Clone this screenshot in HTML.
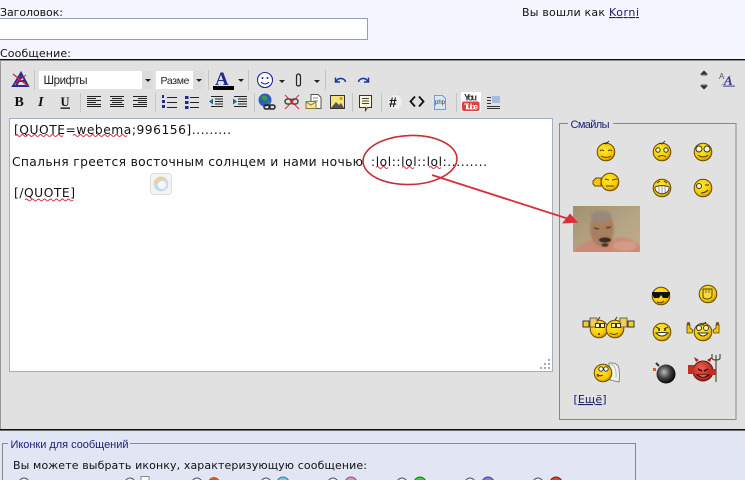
<!DOCTYPE html>
<html lang="ru"><head><meta charset="utf-8"><title>Сообщение</title>
<style>
html,body{margin:0;padding:0;width:745px;height:480px;overflow:hidden;background:#f5f5ff}
svg{display:block;position:absolute;left:0;top:0}
.v{font-family:"DejaVu Sans","Liberation Sans",sans-serif;font-size:11px;fill:#111}
.t{font-family:"Liberation Sans","DejaVu Sans",sans-serif;font-size:11.5px;fill:#222}
.e{font-family:"DejaVu Sans","Liberation Sans",sans-serif;font-size:12.3px;fill:#111}
.n{fill:#1c1c78}
</style></head><body>
<svg width="745" height="480" viewBox="0 0 745 480" xmlns="http://www.w3.org/2000/svg">
<defs>
<radialGradient id="y" cx=".42" cy=".38" r=".68"><stop offset="0" stop-color="#ffec30"/><stop offset=".7" stop-color="#f6c800"/><stop offset="1" stop-color="#a87800"/></radialGradient>
<radialGradient id="bomb" cx=".4" cy=".4" r=".65"><stop offset="0" stop-color="#bbb"/><stop offset=".5" stop-color="#444"/><stop offset="1" stop-color="#000"/></radialGradient>
<radialGradient id="devil" cx=".4" cy=".35" r=".7"><stop offset="0" stop-color="#f06050"/><stop offset="1" stop-color="#a01c14"/></radialGradient>
<linearGradient id="ph" x1="0" y1="0" x2="1" y2="1"><stop offset="0" stop-color="#a3906f"/><stop offset=".6" stop-color="#b7a686"/><stop offset="1" stop-color="#bdab8d"/></linearGradient>
<filter id="bl" x="-20%" y="-20%" width="140%" height="140%"><feGaussianBlur stdDeviation="1"/></filter>
<filter id="bs" x="-30%" y="-30%" width="160%" height="160%"><feGaussianBlur stdDeviation=".5"/></filter>
<clipPath id="phc"><rect x="573" y="206" width="67" height="46"/></clipPath>
<symbol id="f" overflow="visible"><circle r="8.8" fill="url(#y)" stroke="#6a4c04" stroke-width="1"/></symbol>
</defs>

<!-- backgrounds -->
<rect width="745" height="59" fill="#f5f5ff"/>
<rect y="59" width="745" height="371" fill="#e1e1e2"/>
<rect y="59" width="745" height="1.4" fill="#111"/>
<rect x="0" y="60" width="1" height="370" fill="#999"/>
<rect y="429" width="745" height="1.6" fill="#111"/>
<rect y="431" width="745" height="49" fill="#e2e5f4"/>

<!-- top texts -->
<text class="v" x="0" y="16" textLength="63">Заголовок:</text>
<rect x="-2" y="18.500" width="369.500" height="21" fill="#fff" stroke="#8ea2b4"/>
<text class="v" x="0" y="57" textLength="71">Сообщение:</text>
<text class="v" x="522" y="16" textLength="83">Вы вошли как</text>
<text class="v n" x="609" y="16" textLength="30" text-decoration="underline">Korni</text>

<!-- toolbar row 1 -->
<g transform="translate(12,71)">
<path d="M1 15H16L9 2Z" fill="none" stroke="#2a2a90" stroke-width="2"/><path d="M4 15L10 4M6 10H14" stroke="#2a2a90" stroke-width="2"/><path d="M1 3L16 15" stroke="#d02030" stroke-width="1.200"/><path d="M1 14L14 4" stroke="#d02030" stroke-width="1"/>
</g>
<g fill="#c4c4c6">
<rect x="34" y="70" width="1" height="20"/><rect x="208" y="70" width="1" height="20"/><rect x="248" y="70" width="1" height="20"/><rect x="325" y="70" width="1" height="20"/>
<rect x="80" y="93" width="1" height="19"/><rect x="155" y="93" width="1" height="19"/><rect x="254" y="93" width="1" height="19"/><rect x="352" y="93" width="1" height="19"/><rect x="381" y="93" width="1" height="19"/><rect x="456" y="93" width="1" height="19"/>
</g>
<rect x="39" y="71" width="114" height="18" fill="#fff"/>
<rect x="142" y="71" width="11" height="18" fill="#dcdcdc"/>
<path d="M145 79h6l-3 3z" fill="#222"/>
<text class="t" x="43.500" y="84" textLength="44">Шрифты</text>
<rect x="156" y="71" width="48" height="18" fill="#fff"/>
<rect x="193" y="71" width="11" height="18" fill="#dcdcdc"/>
<path d="M196 79h6l-3 3z" fill="#222"/>
<text class="t" x="160.500" y="84" textLength="29" style="font-size:10.500px">Разме</text>

<text x="215" y="85" style="font-family:'Liberation Serif',serif;font-weight:bold;font-size:19px;fill:#1c2a90">A</text>
<rect x="213" y="86" width="21" height="4" fill="#000"/>
<path d="M238 79h6l-3 3z" fill="#222"/>
<circle cx="265" cy="80" r="7.500" fill="#fff" stroke="#1f2a90" stroke-width="1.100"/>
<circle cx="262.500" cy="78" r="1" fill="#1f2a90"/><circle cx="267.500" cy="78" r="1" fill="#1f2a90"/>
<path d="M261 82q4 4 8 0" fill="none" stroke="#1f2a90"/>
<path d="M279 80h6l-3 3z" fill="#222"/>
<path d="M296.500 83V77q0-3 2-3t2 3v7q0 2-2 2t-2-2V78" fill="none" stroke="#222" stroke-width="1.200"/>
<path d="M314 80h6l-3 3z" fill="#222"/>
<path d="M335.500 77.500v4.500h4.500M336 81.500q2-3.500 5.500-3t4 3.500" fill="none" stroke="#1c3a9a" stroke-width="1.500"/>
<path d="M368.500 77.500v4.500h-4.500M368 81.500q-2-3.500-5.500-3t-4 3.500" fill="none" stroke="#1c3a9a" stroke-width="1.500"/>

<!-- toolbar row 2 -->
<text x="14.500" y="106" style="font-family:'Liberation Serif',serif;font-weight:bold;font-size:14px;fill:#111">B</text>
<text x="38" y="106" style="font-family:'Liberation Serif',serif;font-weight:bold;font-style:italic;font-size:14px;fill:#111">I</text>
<text x="60.500" y="106" style="font-family:'Liberation Serif',serif;font-weight:bold;font-size:12.500px;fill:#111">U</text>
<rect x="60.500" y="107.500" width="9.500" height="1.300" fill="#111"/>
<g stroke="#222" stroke-width="1">
<path d="M87 96.500h14M87 98.500h9M87 100.500h14M87 102.500h9M87 104.500h14M87 106.500h14"/>
<path d="M110 96.500h14M112 98.500h10M110 100.500h14M112 102.500h10M110 104.500h14M110 106.500h14"/>
<path d="M133 96.500h14M138 98.500h9M133 100.500h14M138 102.500h9M133 104.500h14M133 106.500h14"/>
<path d="M167 97.500h10M167 102.500h10M167 107.500h10"/>
<path d="M190 97.500h9M190 102.500h9M190 107.500h9"/>
<path d="M211 96.500h12M215 99h8M215 101.500h8M215 104h8M211 106.500h12"/>
<path d="M234 96.500h13M238 99h9M238 101.500h9M238 104h9M234 106.500h13"/>
</g>
<g fill="#1f2a90">
<rect x="162" y="95" width="2" height="3"/><rect x="162" y="100" width="3" height="3"/><rect x="162" y="105" width="3" height="3"/>
<rect x="185" y="96" width="3.500" height="3"/><rect x="185" y="101" width="3.500" height="3"/><rect x="185" y="106" width="3.500" height="3"/>
</g>
<g fill="#1f6a90"><path d="M209 101.500l4-3v6z"/><path d="M237 101.500l-4-3v6z"/></g>
<!-- globe -->
<circle cx="265" cy="100" r="6.500" fill="#2a5ec0"/><path d="M261 97q4-3 6 0t-3 4zM267 102l3-1-1 3z" fill="#3c9a3c"/>
<g fill="none" stroke="#222" stroke-width="1.500"><rect x="264" y="105" width="6" height="4" rx="2"/><rect x="269" y="105" width="6" height="4" rx="2"/></g>
<!-- unlink -->
<g fill="none" stroke="#444" stroke-width="1.500"><rect x="285" y="99" width="7" height="5" rx="2.500"/><rect x="291" y="99" width="7" height="5" rx="2.500"/></g>
<path d="M285 95L299 109M299 95L285 109" stroke="#d03030" stroke-width="1"/>
<!-- doc with envelope -->
<path d="M311 94.500h7l3 3v11h-10z" fill="#fff" stroke="#555"/><path d="M313 98h5M313 101h5" stroke="#888"/>
<path d="M306 101.500h10v7h-10z" fill="#f3e6a0" stroke="#8a7a30"/><path d="M306 102l5 3 5-3" fill="none" stroke="#8a7a30"/>
<!-- image -->
<rect x="330.500" y="95.500" width="14" height="13" fill="#f4e27a" stroke="#333"/>
<path d="M331 108l5-6 3 3 2-2 3 5z" fill="#555"/><circle cx="341" cy="98.500" r="1.500" fill="#e08a20"/>
<!-- quote -->
<path d="M359.500 95.500h12v12h-4l-2 3v-3h-6z" fill="#fff8d8" stroke="#333"/><path d="M362 98.500h7M362 101h7M362 103.500h7" stroke="#444"/>
<!-- # <> php -->
<circle cx="395" cy="102" r="7" fill="#eee"/>
<text x="389" y="107" style="font-family:'Liberation Sans',sans-serif;font-weight:bold;font-size:14px;fill:#111">#</text>
<path d="M415 96.500l-4.500 5 4.500 5M419 96.500l4.500 5-4.500 5" fill="none" stroke="#111" stroke-width="1.800"/>
<path d="M434.500 95.500h8l3 3v11h-11z" fill="#d8e6f6" stroke="#7a9cc8"/>
<text x="435" y="104" style="font-family:'Liberation Sans',sans-serif;font-size:6px;fill:#333" textLength="10">php</text>
<!-- youtube -->
<rect x="461" y="92" width="20" height="20" fill="#fff"/>
<text x="464" y="100.500" style="font-family:'Liberation Sans',sans-serif;font-weight:bold;font-size:9px;fill:#333" textLength="13">You</text>
<rect x="462" y="101.500" width="17.500" height="9.500" rx="2" fill="#e04040"/>
<text x="464" y="109.500" style="font-family:'Liberation Sans',sans-serif;font-weight:bold;font-size:8.500px;fill:#fff" textLength="14">Tube</text>
<!-- list -->
<path d="M487 97.500h4M487 100.500h4M487 103.500h4M487 106.500h13M487 108.500h13" stroke="#333"/>
<rect x="492" y="96" width="8" height="7" fill="#a8bce0"/>

<!-- right toolbar -->
<path d="M704 71l-3 3h6zM701 75h6" fill="#333" stroke="#333" stroke-width=".8"/>
<path d="M704 89l-3-3h6zM701 85h6" fill="#333" stroke="#333" stroke-width=".8"/>
<text x="719" y="79" style="font-family:'Liberation Sans',sans-serif;font-size:8px;fill:#555">A</text>
<path d="M721 86l10-11" stroke="#bbb"/>
<text x="724" y="85" style="font-family:'Liberation Serif',serif;font-weight:bold;font-style:italic;font-size:13px;fill:#3a3a90">A</text>
<rect x="723" y="85.600" width="12" height="1" fill="#3a3a90"/>

<!-- editor -->
<rect x="9.500" y="118.500" width="543" height="253" fill="#fff" stroke="#9fb0c4"/>
<text class="e" x="14" y="134" textLength="217">[QUOTE=webema;996156].........</text>
<text class="e" x="12" y="166" textLength="351">Спальня греется восточным солнцем и нами ночью</text>
<text class="e" x="371" y="166" textLength="116">:lol::lol::lol:.........</text>
<text class="e" x="14" y="197" textLength="61">[/QUOTE]</text>
<g fill="none" stroke="#c8343c" stroke-width="1">
<path d="M15 135.500q1.500-2 3 0t3 0 3 0 3 0 3 0 3 0 3 0 3 0 3 0 3 0 3 0 3 0 3 0 3 0 3 0 3 0"/>
<path d="M73 135.500q1.500-2 3 0t3 0 3 0 3 0 3 0 3 0 3 0 3 0 3 0 3 0 3 0 3 0 3 0 3 0 3 0 3 0 3 0 3 0"/>
<path d="M25 200q1.500-2 3 0t3 0 3 0 3 0 3 0 3 0 3 0 3 0 3 0 3 0 3 0 3 0 3 0 3 0 3 0 3 0"/>
<path d="M376 167.500q1.500-2 3 0t3 0 3 0 3 0"/>
<path d="M402 167.500q1.500-2 3 0t3 0 3 0 3 0"/>
<path d="M429 167.500q1.500-2 3 0t3 0 3 0 3 0"/>
</g>
<g fill="#aaa"><rect x="548" y="359" width="2" height="2"/><rect x="544" y="363" width="2" height="2"/><rect x="548" y="363" width="2" height="2"/><rect x="540" y="367" width="2" height="2"/><rect x="544" y="367" width="2" height="2"/><rect x="548" y="367" width="2" height="2"/></g>

<!-- spinner bubble -->
<rect x="150.500" y="173.500" width="21" height="21" rx="3.500" fill="#f6f4f2" stroke="#ddd"/>
<circle cx="161" cy="184" r="7.500" fill="#c8dcec"/>
<path d="M154 183a7 6 0 0 1 13-3q-5-1-7 1t-6 2z" fill="#f2cf90"/>
<circle cx="162" cy="185" r="4" fill="#fff" opacity=".8"/>

<!-- smilies fieldset -->
<rect x="559.500" y="123.500" width="176.500" height="296" fill="none" stroke="#8a8a84"/>
<rect x="568" y="118" width="45" height="10" fill="#e1e1e2"/>
<text class="t n" x="570.500" y="128" textLength="39" style="font-size:11px">Смайлы</text>

<!-- row 1 -->
<use href="#f" x="606" y="152"/><path d="M600 151q2-2 4 0M608 151q2-2 4 0M601 156q5 3 10 0" fill="none" stroke="#5a4208"/><path d="M603 143l3 1 3-3M606 144v-2" fill="none" stroke="#332" stroke-width=".9"/>
<use href="#f" x="662" y="152"/><circle cx="658" cy="150" r="2.200" fill="#fff8c0" stroke="#333"/><circle cx="666" cy="150" r="2.200" fill="#fff8c0" stroke="#333"/><path d="M658 157q4-3 8 0" fill="none" stroke="#5a4208"/><path d="M659 143l3 1 3-3" fill="none" stroke="#332" stroke-width=".9"/>
<use href="#f" x="703" y="152"/><circle cx="699" cy="149" r="3" fill="#fff8c0" stroke="#333"/><circle cx="707" cy="149" r="3" fill="#fff8c0" stroke="#333"/><path d="M698 155q5 4 10 0" fill="none" stroke="#333"/>
<!-- row 2 -->
<path d="M593 181l3-3h5v8h-6l-2-2z" fill="#f6c800" stroke="#6a4c04"/><use href="#f" x="610" y="182"/><path d="M605 179l4 1M612 180l5-1M606 186h8" fill="none" stroke="#5a4208"/>
<use href="#f" x="662" y="188"/><path d="M655 187q7-3 14 0v2q-1 4-7 5-6-1-7-5z" fill="#fff" stroke="#333" stroke-width=".9"/><path d="M659 186v8M662 185.500v9M665 186v8" stroke="#555" stroke-width=".6"/><path d="M657 183l3-2M667 183l-3-2" stroke="#333"/>
<use href="#f" x="703" y="188"/><circle cx="699" cy="186" r="2.500" fill="#fff8c0" stroke="#333"/><path d="M705 185h4M701 193q4 0 7-3" fill="none" stroke="#333"/>

<!-- photo -->
<g clip-path="url(#phc)">
<rect x="573" y="206" width="67" height="46" fill="url(#ph)"/>
<g filter="url(#bl)">
<path d="M612 240Q625 233 640 246V253H573Q578 245 590 240Z" fill="#c98a76"/>
<ellipse cx="602" cy="229" rx="12" ry="18" fill="#a9805f"/>
<ellipse cx="601" cy="216.500" rx="10.500" ry="6" fill="#97897a"/>
<ellipse cx="625" cy="246" rx="12" ry="5" fill="#d49c88"/>
</g>
<g filter="url(#bs)">
<path d="M594 228l5 1M606 228l5-1" stroke="#4a3020" stroke-width="1.400"/>
<ellipse cx="605" cy="240" rx="6" ry="2.500" fill="#3a2a20"/>
<ellipse cx="605" cy="245" rx="3.500" ry="1.800" fill="#4a3428"/>
</g>
</g>

<!-- row: glasses / fist -->
<use href="#f" x="661" y="296"/><path d="M652 292h18v2l-2 4h-5l-2-3-2 3h-5l-2-4z" fill="#111"/><path d="M657 302q4 2 7-1" fill="none" stroke="#5a4208"/>
<use href="#f" x="708" y="294"/><path d="M703 289h9v7q-1 3-5 3t-4-3z" fill="#f5d840" stroke="#5a4208"/><path d="M706 289v4M709 289v4" stroke="#5a4208" stroke-width=".7"/>

<!-- beers -->
<use href="#f" x="599" y="329"/><use href="#f" x="615" y="329"/>
<rect x="590" y="318" width="7" height="9" fill="#f3cc50" stroke="#665"/><rect x="620" y="318" width="7" height="9" fill="#f3cc50" stroke="#665"/>
<rect x="583" y="321" width="6" height="6" fill="#f3d030" stroke="#333"/><rect x="628" y="321" width="6" height="6" fill="#f3d030" stroke="#333"/>
<rect x="595.500" y="323.500" width="4" height="4" fill="#fff8c0" stroke="#333"/><rect x="600.500" y="323.500" width="4" height="4" fill="#fff8c0" stroke="#333"/>
<rect x="611.500" y="323.500" width="4" height="4" fill="#fff8c0" stroke="#333"/><rect x="616.500" y="323.500" width="4" height="4" fill="#fff8c0" stroke="#333"/>
<path d="M610 333q4 3 8 0" fill="none" stroke="#5a4208"/><circle cx="599" cy="334" r="1" fill="#332"/>
<path d="M598 320l2-3M615 320l2-3" stroke="#332"/>
<!-- grin -->
<use href="#f" x="662" y="332"/><path d="M656 327l4 2M668 327l-4 2" stroke="#333"/><path d="M656 333q6 6 12 0q-6-1-12 0z" fill="#fff" stroke="#333"/>
<circle cx="659" cy="330" r="1" fill="#333"/><circle cx="665" cy="330" r="1" fill="#333"/>
<!-- hands smiley -->
<use href="#f" x="703" y="332"/>
<path d="M687 333v-8l1-3v3h1v-3l1 3v3l3 2-1 3z" fill="#f6c800" stroke="#5a4208" stroke-width=".8"/>
<path d="M719 333v-8l-1-3v3h-1v-3l-1 3v3l-3 2 1 3z" fill="#f6c800" stroke="#5a4208" stroke-width=".8"/>
<circle cx="699" cy="328" r="2.500" fill="#fff8c0" stroke="#333"/><circle cx="706" cy="328" r="2.500" fill="#fff8c0" stroke="#333"/>
<path d="M698 333q5 6 10 0z" fill="#fff" stroke="#333"/>
<path d="M700 324l3 1 3-3" fill="none" stroke="#332"/>

<!-- angel -->
<path d="M609 363q9-1 10 6t0 13l-9-2z" fill="#f2f2ee" stroke="#8a8a80"/>
<use href="#f" x="603" y="373"/><circle cx="601" cy="369" r="2.200" fill="#fff" stroke="#333"/><circle cx="606" cy="369" r="2.200" fill="#fff" stroke="#333"/><path d="M597 374q3 3 6 1" fill="none" stroke="#333"/><circle cx="598" cy="375.500" r="1.300" fill="#d02030"/>
<path d="M611 364q6 2 5 14" fill="none" stroke="#bbb"/>
<!-- bomb -->
<circle cx="666" cy="374" r="9.500" fill="url(#bomb)"/>
<path d="M659 366l-3-3" stroke="#333" stroke-width="2"/>
<rect x="653" y="368" width="3" height="3" fill="#d86020"/>
<!-- devil -->
<circle cx="703" cy="371" r="10" fill="url(#devil)" stroke="#6a1008"/>
<path d="M696 362l-2-5 5 3zM710 362l2-5-5 3z" fill="#b02018"/>
<path d="M698 369l4 2M708 369l-4 2" stroke="#300" stroke-width="1.500"/>
<path d="M697 375q6 4 12 0z" fill="#fff" stroke="#400"/>
<path d="M688 365h6v9h-6z" fill="#c82c20"/>
<path d="M716 355v27M712 354v4q0 2 4 2t4-2v-4" fill="none" stroke="#332" stroke-width="1"/>
<rect x="710" y="369" width="6" height="6" fill="#c82c20"/>

<text class="v" x="573.500" y="403" textLength="33" style="fill:#1a1a60">[<tspan text-decoration="underline">Ещё</tspan>]</text>

<!-- annotation -->
<ellipse cx="410" cy="160" rx="47" ry="24.500" transform="rotate(-2 410 160)" fill="none" stroke="#c82f38" stroke-width="1.600"/>
<path d="M432 175L572 220" stroke="#d8303a" stroke-width="1.800"/>
<path d="M578 222.500L562 223.500L570 213.500Z" fill="#d8303a"/>

<!-- bottom fieldset -->
<rect x="2.500" y="443.500" width="633" height="50" fill="none" stroke="#8a8a84"/>
<rect x="8" y="438" width="122" height="10" fill="#e2e5f4"/>
<text class="t n" x="10.500" y="448" textLength="118" style="font-size:11px">Иконки для сообщений</text>
<text class="v" x="13" y="469" textLength="354">Вы можете выбрать иконку, характеризующую сообщение:</text>
<g fill="#eef" stroke="#556">
<circle cx="24" cy="483" r="5"/><circle cx="130" cy="483" r="5"/><circle cx="197" cy="483" r="5"/><circle cx="266" cy="483" r="5"/><circle cx="333" cy="483" r="5"/><circle cx="402" cy="483" r="5"/><circle cx="470" cy="483" r="5"/><circle cx="538" cy="483" r="5"/>
</g>
<rect x="141" y="476.500" width="8" height="8" fill="#fff" stroke="#888"/>
<circle cx="214" cy="483" r="6" fill="#d8581c"/><circle cx="283" cy="483" r="6" fill="#7ac8e4" stroke="#3a7a9a"/><circle cx="351" cy="483" r="6" fill="#e090b0" stroke="#8a5a70"/><circle cx="420" cy="483" r="6" fill="#30d030" stroke="#1a7a1a"/><circle cx="488" cy="483" r="6" fill="#8a78e0" stroke="#4a3a9a"/><circle cx="556" cy="483" r="6" fill="#e03c30" stroke="#8a1a10"/>
</svg>
</body></html>
